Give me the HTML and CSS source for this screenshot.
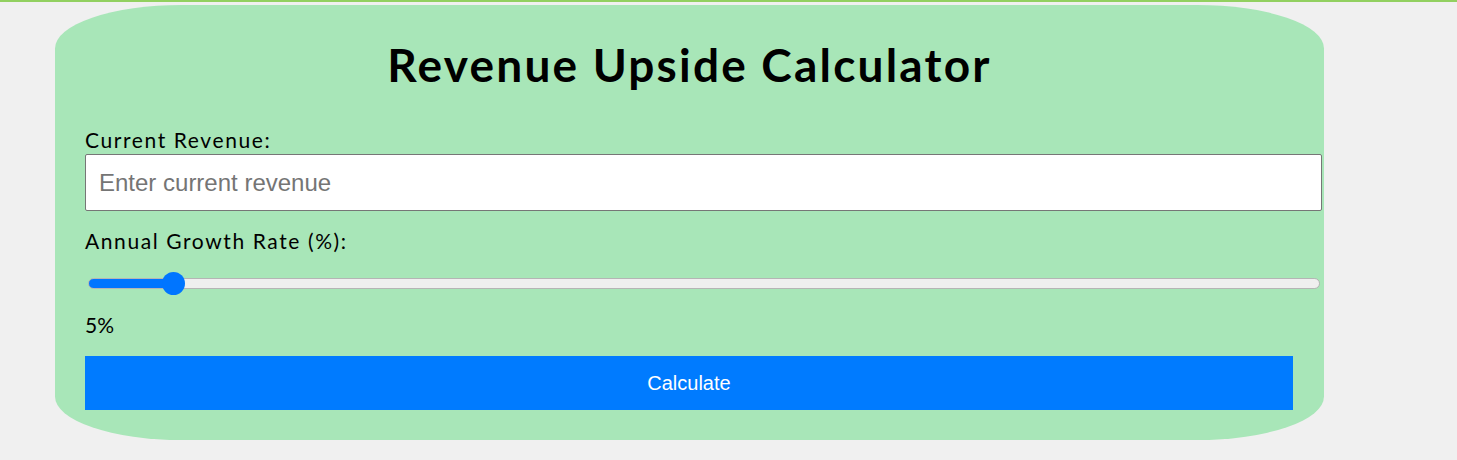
FILE: index.html
```html
<!DOCTYPE html>
<html lang="en">
<head>
<meta charset="utf-8">
<title>Revenue Upside Calculator</title>
<link rel="stylesheet" href="styles.css">
</head>
<body>
<div class="topbar"></div>
<div class="card">
  <h1 class="title">Revenue Upside Calculator</h1>
  <label class="label" for="revenue">Current Revenue:</label>
  <input class="text-input" id="revenue" type="number" placeholder="Enter current revenue">
  <label class="label label-gap" for="growth">Annual Growth Rate (%):</label>
  <input class="range" id="growth" type="range" min="0" max="83" value="5" style="--fill: 84px">
  <div class="value">5%</div>
  <button class="btn" type="button">Calculate</button>
</div>
</body>
</html>
```

FILE: styles.css
```css
html, body {
  margin: 0;
  padding: 0;
  background: #f0f0f0;
}

body {
  font-family: "Trebuchet MS", Lato, "DejaVu Sans", sans-serif;
  color: #000;
}

.topbar {
  height: 2px;
  background: #92d060;
}

.card {
  width: 1209px;
  margin: 3px 0 0 55px;
  padding: 30px;
  background: #a8e6b8;
  border-radius: 10%;
  display: flex;
  flex-direction: column;
  align-items: flex-start;
}

.title {
  align-self: stretch;
  margin: 2px 0 0;
  text-align: center;
  font-size: 46px;
  line-height: 56px;
  font-weight: 700;
  letter-spacing: 2.2px;
}

.label {
  display: block;
  margin-top: 35px;
  font-size: 21px;
  line-height: 24px;
  letter-spacing: 1.6px;
}

.label-gap {
  margin-top: 18px;
}

.text-input {
  box-sizing: border-box;
  width: 1237px;
  height: 57px;
  margin: 2px 0 0;
  padding: 0 13px;
  border: 1px solid #767676;
  border-radius: 2px;
  background: #fff;
  font-family: "Liberation Sans", Arial, sans-serif;
  font-size: 24px;
  color: #000;
  outline: none;
  -moz-appearance: textfield;
}

.text-input::-webkit-outer-spin-button,
.text-input::-webkit-inner-spin-button {
  -webkit-appearance: none;
  margin: 0;
}

.text-input::placeholder {
  color: #757575;
}

.range {
  -webkit-appearance: none;
  appearance: none;
  width: 1232px;
  height: 24px;
  margin: 18px 0 0 3px;
  padding: 0;
  background: transparent;
}

.range::-webkit-slider-runnable-track {
  box-sizing: border-box;
  height: 11px;
  border-radius: 6px;
  border: 1px solid #b5b5b5;
  background: linear-gradient(to right, #0075ff var(--fill), #efefef var(--fill));
}

.range::-webkit-slider-thumb {
  -webkit-appearance: none;
  appearance: none;
  width: 23px;
  height: 23px;
  margin-top: -7px;
  border: none;
  border-radius: 50%;
  background: #0075ff;
}

.value {
  margin-top: 18px;
  font-size: 21px;
  line-height: 24px;
}

.btn {
  width: 1208px;
  height: 54px;
  margin-top: 19px;
  border: none;
  background: #007bff;
  color: #fff;
  font-family: "Liberation Sans", Arial, sans-serif;
  font-size: 20px;
  cursor: pointer;
}
```
